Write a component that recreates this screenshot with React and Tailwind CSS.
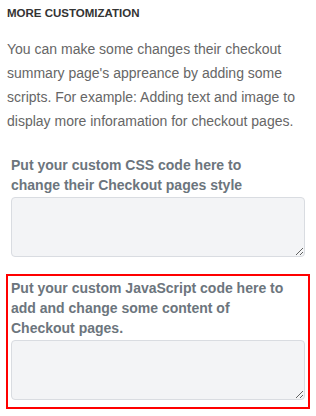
import React from "react";

const Field = ({ children }) => (
  <div className="flex flex-col gap-[2px]">
    <label className="text-[14px] leading-[20px] font-bold text-[#6c757d]">{children}</label>
    <textarea className="h-[60px] w-full rounded-[4px] border border-[#d9dce1] bg-[#f3f4f6]" />
  </div>
);

export default function App() {
  return (
    <div className="min-h-screen bg-white px-[7px] pt-[5px] font-['Liberation_Sans',Arial,sans-serif]">
      <h2 className="text-[11.5px] leading-[16px] font-bold text-[#333]">MORE CUSTOMIZATION</h2>
      <p className="mt-[16px] text-[14px] leading-[24px] text-[#666] whitespace-nowrap">
        You can make some changes their checkout
        <br />
        summary page's appreance by adding some
        <br />
        scripts. For example: Adding text and image to
        <br />
        display more inforamation for checkout pages.
      </p>
      <div className="mt-[22px] px-[4px]">
        <Field>
          Put your custom CSS code here to
          <br />
          change their Checkout pages style
        </Field>
      </div>
      <div className="mt-[17px] w-[304px] -ml-[1px] border-2 border-[#ff0000] px-[3px] pt-[2px] pb-[7px]">
        <Field>
          Put your custom JavaScript code here to
          <br />
          add and change some content of
          <br />
          Checkout pages.
        </Field>
      </div>
    </div>
  );
}
